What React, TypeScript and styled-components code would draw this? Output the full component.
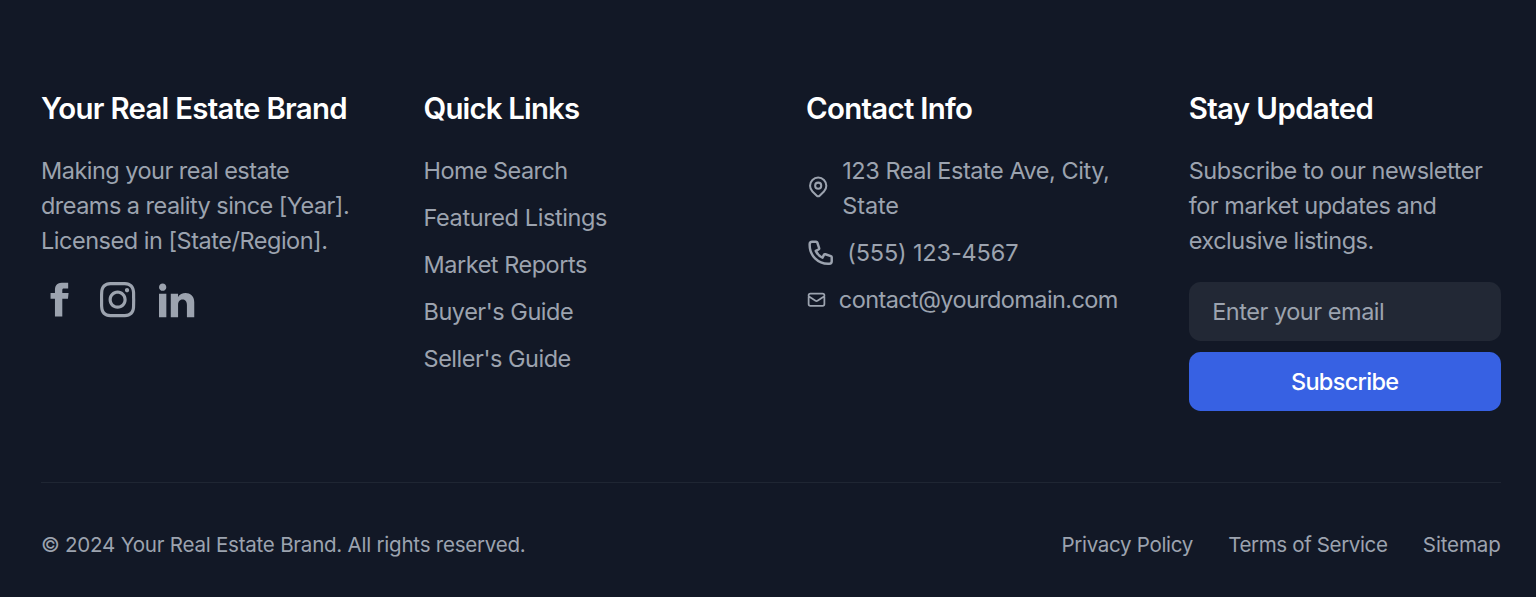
import React from 'react';
import styled, { createGlobalStyle } from 'styled-components';

const GlobalStyle = createGlobalStyle`
  *, *::before, *::after { box-sizing: border-box; }
  body {
    margin: 0;
    background: #121826;
    font-family: Inter, 'Liberation Sans', sans-serif;
    -webkit-font-smoothing: antialiased;
  }
  h3, p, ul { margin: 0; padding: 0; }
  ul { list-style: none; }
  a { color: inherit; text-decoration: none; }
`;

const Footer = styled.footer`
  height: 597px;
  padding: 88px 35.3px 0 41px;
  overflow: hidden;
  background: #121826;
  color: #9ca3af;
  font-size: 23.5px;
  line-height: 35.25px;
`;

const Columns = styled.div`
  display: grid;
  grid-template-columns: repeat(4, minmax(0, 1fr));
  gap: 70.5px;
`;

const Heading = styled.h3<{ $tracking: number }>`
  margin-bottom: 23.5px;
  color: #fff;
  font-size: 29.4px;
  font-weight: 600;
  line-height: 41.1px;
  letter-spacing: ${(p) => p.$tracking}px;
  white-space: nowrap;
`;

const Line = styled.span<{ $tracking?: number }>`
  display: block;
  letter-spacing: ${(p) => p.$tracking ?? -0.48}px;
  white-space: nowrap;
`;

const Socials = styled.div`
  display: flex;
  gap: 23.5px;
  margin-top: 23.5px;

  svg {
    display: block;
    width: 35.25px;
    height: 35.25px;
    overflow: visible;
    fill: currentColor;
  }
`;

const List = styled.ul`
  display: flex;
  flex-direction: column;
  gap: 11.75px;
`;

const ContactItem = styled.li`
  display: flex;
  align-items: center;
  gap: 11.75px;
`;

const ContactIcon = styled.svg<{ $width: number }>`
  flex: none;
  width: ${(p) => p.$width}px;
  height: 29.4px;
  fill: none;
  stroke: currentColor;
  stroke-width: 2;
  stroke-linecap: round;
  stroke-linejoin: round;
`;

const PinIcon = styled(ContactIcon)`
  margin-bottom: 1.6px;
`;

const Form = styled.form`
  display: flex;
  flex-direction: column;
  gap: 11.75px;
  margin-top: 23.5px;
`;

const EmailInput = styled.input`
  width: 100%;
  height: 58.75px;
  padding: 0 23.5px;
  border: 0;
  border-radius: 11.75px;
  outline: 0;
  background: #222835;
  color: #fff;
  font: inherit;
  letter-spacing: -0.47px;

  &::placeholder { color: #9ca3af; opacity: 1; }
`;

const SubscribeButton = styled.button`
  height: 58.75px;
  padding: 0;
  border: 0;
  border-radius: 11.75px;
  background: #3761e3;
  color: #fff;
  font: inherit;
  font-weight: 500;
  letter-spacing: -0.68px;
`;

const Bottom = styled.div`
  display: flex;
  justify-content: space-between;
  margin-top: 70.5px;
  padding-top: 47.2px;
  border-top: 1.5px solid #1f2633;
  font-size: 20.56px;
  line-height: 29.4px;
`;

const LegalLinks = styled.nav`
  display: flex;
  gap: 35.25px;
`;

const App = () => (
  <>
    <GlobalStyle />
    <Footer>
      <Columns>
        <section>
          <Heading $tracking={-0.72}>Your Real Estate Brand</Heading>
          <p>
            <Line $tracking={-0.52}>Making your real estate</Line>
            <Line $tracking={-0.53}>dreams a reality since [Year].</Line>
            <Line>Licensed in [State/Region].</Line>
          </p>
          <Socials>
            <a href="#" aria-label="Facebook">
              <svg viewBox="0 0 24 24">
                <path d="M18.77 7.46H14.5v-1.9c0-.9.6-1.1 1-1.1h3V.5h-4.33C10.24.5 9.5 3.44 9.5 5.32v2.15h-3v4h3v12h5v-12h3.85l.42-4z" />
              </svg>
            </a>
            <a href="#" aria-label="Instagram">
              <svg viewBox="0 0 24 24">
                <path d="M12 2.163c3.204 0 3.584.012 4.85.07 3.252.148 4.771 1.691 4.919 4.919.058 1.265.069 1.645.069 4.849 0 3.205-.012 3.584-.069 4.849-.149 3.225-1.664 4.771-4.919 4.919-1.266.058-1.644.07-4.85.07-3.204 0-3.584-.012-4.849-.07-3.26-.149-4.771-1.699-4.919-4.92-.058-1.265-.07-1.644-.07-4.849 0-3.204.013-3.583.07-4.849.149-3.227 1.664-4.771 4.919-4.919 1.266-.057 1.645-.069 4.849-.069zm0-2.163c-3.259 0-3.667.014-4.947.072-4.358.2-6.78 2.618-6.98 6.98-.059 1.281-.073 1.689-.073 4.948 0 3.259.014 3.668.072 4.948.2 4.358 2.618 6.78 6.98 6.98 1.281.058 1.689.072 4.948.072 3.259 0 3.668-.014 4.948-.072 4.354-.2 6.782-2.618 6.979-6.98.059-1.28.073-1.689.073-4.948 0-3.259-.014-3.667-.072-4.947-.196-4.354-2.617-6.78-6.979-6.98-1.281-.059-1.69-.073-4.949-.073zm0 5.838c-3.403 0-6.162 2.759-6.162 6.162s2.759 6.163 6.162 6.163 6.162-2.759 6.162-6.163c0-3.403-2.759-6.162-6.162-6.162zm0 10.162c-2.209 0-4-1.79-4-4 0-2.209 1.791-4 4-4s4 1.791 4 4c0 2.21-1.791 4-4 4zm6.406-11.845c-.796 0-1.441.645-1.441 1.44s.645 1.44 1.441 1.44c.795 0 1.439-.645 1.439-1.44s-.644-1.44-1.439-1.44z" />
              </svg>
            </a>
            <a href="#" aria-label="LinkedIn">
              <svg viewBox="0 0 24 24">
                <path d="M4.98 3.5c0 1.381-1.11 2.5-2.48 2.5s-2.48-1.119-2.48-2.5c0-1.38 1.11-2.5 2.48-2.5s2.48 1.12 2.48 2.5zm.02 4.5h-5v16h5v-16zm7.982 0h-4.968v16h4.969v-8.399c0-4.67 6.029-5.052 6.029 0v8.399h4.988v-10.131c0-7.88-8.922-7.593-11.018-3.714v-2.155z" />
              </svg>
            </a>
          </Socials>
        </section>

        <section>
          <Heading $tracking={-0.82}>Quick Links</Heading>
          <List>
            <li><Line as="a" href="#" $tracking={-0.58}>Home Search</Line></li>
            <li><Line as="a" href="#" $tracking={-0.4}>Featured Listings</Line></li>
            <li><Line as="a" href="#">Market Reports</Line></li>
            <li><Line as="a" href="#">Buyer's Guide</Line></li>
            <li><Line as="a" href="#">Seller's Guide</Line></li>
          </List>
        </section>

        <section>
          <Heading $tracking={-0.7}>Contact Info</Heading>
          <List>
            <ContactItem>
              <PinIcon $width={24.4} viewBox="0 0 24 24">
                <path d="M17.657 16.657L13.414 20.9a1.998 1.998 0 01-2.827 0l-4.244-4.243a8 8 0 1111.314 0z" />
                <path d="M15 11a3 3 0 11-6 0 3 3 0 016 0z" />
              </PinIcon>
              <div>
                <Line $tracking={-0.46}>123 Real Estate Ave, City,</Line>
                <Line $tracking={-0.1}>State</Line>
              </div>
            </ContactItem>
            <ContactItem>
              <ContactIcon $width={29.4} viewBox="0 0 24 24">
                <path d="M3 5a2 2 0 012-2h3.28a1 1 0 01.948.684l1.498 4.493a1 1 0 01-.502 1.21l-2.257 1.13a11.042 11.042 0 005.516 5.516l1.13-2.257a1 1 0 011.21-.502l4.493 1.498a1 1 0 01.684.949V19a2 2 0 01-2 2h-1C9.716 21 3 14.284 3 6V5z" />
              </ContactIcon>
              <Line $tracking={-0.15}>(555) 123-4567</Line>
            </ContactItem>
            <ContactItem>
              <ContactIcon $width={21} viewBox="0 0 24 24">
                <path d="M3 8l7.89 5.26a2 2 0 002.22 0L21 8M5 19h14a2 2 0 002-2V7a2 2 0 00-2-2H5a2 2 0 00-2 2v10a2 2 0 002 2z" />
              </ContactIcon>
              <Line $tracking={-0.6}>contact@yourdomain.com</Line>
            </ContactItem>
          </List>
        </section>

        <section>
          <Heading $tracking={-0.6}>Stay Updated</Heading>
          <p>
            <Line $tracking={-0.44}>Subscribe to our newsletter</Line>
            <Line>for market updates and</Line>
            <Line>exclusive listings.</Line>
          </p>
          <Form onSubmit={(e) => e.preventDefault()}>
            <EmailInput type="email" placeholder="Enter your email" />
            <SubscribeButton type="submit">Subscribe</SubscribeButton>
          </Form>
        </section>
      </Columns>

      <Bottom>
        <Line as="p" $tracking={-0.24}>© 2024 Your Real Estate Brand. All rights reserved.</Line>
        <LegalLinks>
          <Line as="a" href="#" $tracking={-0.33}>Privacy Policy</Line>
          <Line as="a" href="#" $tracking={-0.38}>Terms of Service</Line>
          <Line as="a" href="#" $tracking={-0.13}>Sitemap</Line>
        </LegalLinks>
      </Bottom>
    </Footer>
  </>
);

export default App;
